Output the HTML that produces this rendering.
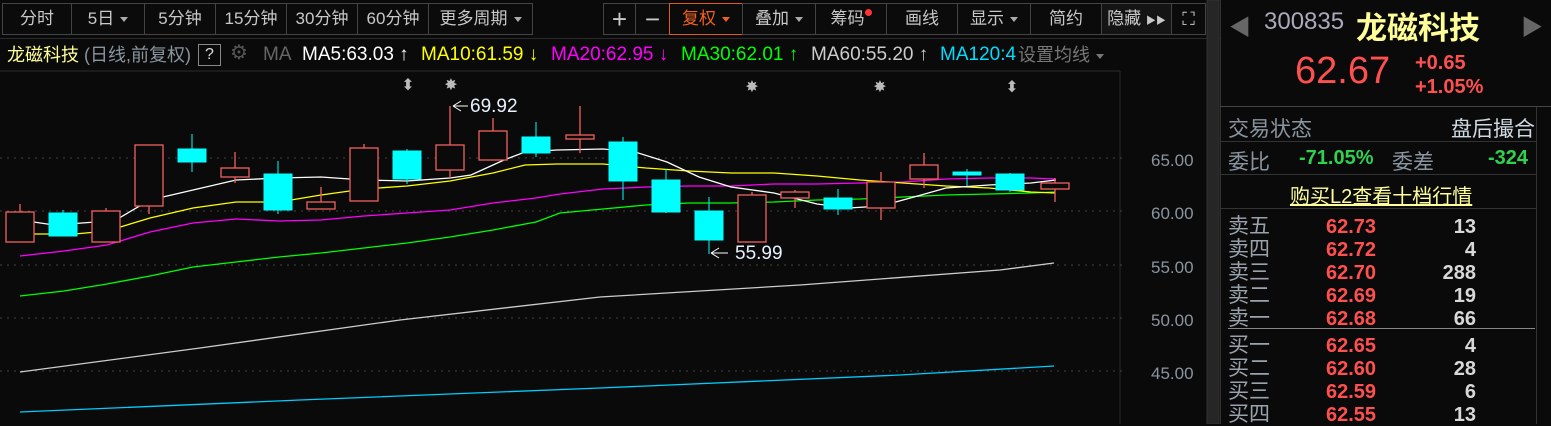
<!DOCTYPE html><html><head><meta charset="utf-8"><style>
body{margin:0;width:1551px;height:424px;background:#0a0a0a;overflow:hidden;position:relative;font-family:"Liberation Sans","Noto Sans CJK SC",sans-serif;}
.b{position:absolute;top:3px;height:32px;border:1px solid #444;box-sizing:border-box;color:#c8c8c8;font-size:17px;line-height:30px;text-align:center;background:#0b0b0b}
.t{position:absolute;white-space:nowrap}
.m{position:absolute;top:44px;font-size:19px;line-height:22px;white-space:nowrap}
.dd{display:inline-block;width:0;height:0;border-left:4px solid transparent;border-right:4px solid transparent;border-top:5px solid #aaa;vertical-align:middle;margin-left:6px}
.r{position:absolute;left:1228px;font-size:20px;line-height:22px;height:22px;width:300px}
.r .n{position:absolute;left:0;color:#9aa3ad;font-size:21px}
.r .p{position:absolute;left:98px;color:#ff5050;font-weight:bold}
.r .v{position:absolute;right:52px;color:#d8d8d8;font-weight:bold}
</style></head><body>
<div class="b" style="left:2px;width:70px">分时</div>
<div class="b" style="left:71px;width:74px">5日<span class="dd"></span></div>
<div class="b" style="left:144px;width:72px">5分钟</div>
<div class="b" style="left:215px;width:72px">15分钟</div>
<div class="b" style="left:286px;width:72px">30分钟</div>
<div class="b" style="left:357px;width:72px">60分钟</div>
<div class="b" style="left:428px;width:105px">更多周期<span class="dd"></span></div>
<div class="b" style="left:603px;width:33px;font-size:26px">+</div>
<div class="b" style="left:635px;width:35px;font-size:26px">−</div>
<div class="b" style="left:669px;width:74px;border-color:#e05a10;color:#f06020">复权<span class="dd" style="border-top-color:#f06020"></span></div>
<div class="b" style="left:742px;width:74px">叠加<span class="dd"></span></div>
<div class="b" style="left:815px;width:72px">筹码<span style="display:inline-block;width:7px;height:7px;border-radius:50%;background:#f33;vertical-align:top;margin-top:5px"></span></div>
<div class="b" style="left:886px;width:72px">画线</div>
<div class="b" style="left:957px;width:74px">显示<span class="dd"></span></div>
<div class="b" style="left:1030px;width:72px">简约</div>
<div class="b" style="left:1101px;width:71px;background:#141414">隐藏 <span style="font-size:10px">▶▶</span></div>
<div class="b" style="left:1171px;width:35px;font-size:18px">⛶</div>
<div style="position:absolute;left:0;top:38px;width:1220px;height:1px;background:#2a2a2a"></div>
<span class="m" style="left:7px;color:#ffff99;font-size:18px">龙磁科技</span>
<span class="m" style="left:84px;color:#8a95a0;font-size:18px">(日线,前复权)</span>
<span class="m" style="left:198px;top:44px;width:21px;height:20px;border:1px solid #888;color:#ddd;text-align:center;font-size:16px;line-height:20px">?</span>
<span class="m" style="left:230px;top:42px;color:#555;font-size:20px">⚙</span>
<span class="m" style="left:263px;color:#666">MA</span>
<span class="m" style="left:302px;color:#fff">MA5:63.03 ↑</span>
<span class="m" style="left:421px;color:#ff0">MA10:61.59 ↓</span>
<span class="m" style="left:551px;color:#f0f">MA20:62.95 ↓</span>
<span class="m" style="left:681px;color:#0f0">MA30:62.01 ↑</span>
<span class="m" style="left:811px;color:#ccc">MA60:55.20 ↑</span>
<span class="m" style="left:940px;color:#0df">MA120:4</span>
<span class="m" style="left:1018px;color:#777;font-size:18px">设置均线<span class="dd" style="border-top-color:#777"></span></span>
<svg style="position:absolute;left:0;top:0" width="1220" height="424">
<line x1="0" y1="71" x2="1120" y2="71" stroke="#2c2c2c"/>
<line x1="1120" y1="71" x2="1120" y2="424" stroke="#2a2a2a"/>
<g stroke="#444" stroke-dasharray="2,5"><line x1="0" y1="158" x2="1125" y2="158"/><line x1="0" y1="211" x2="1125" y2="211"/><line x1="0" y1="265" x2="1125" y2="265"/><line x1="0" y1="318" x2="1125" y2="318"/><line x1="0" y1="371" x2="1125" y2="371"/></g>
<rect x="1207" y="0" width="12" height="424" fill="#262626" stroke="#333"/>
<g font-size="17" fill="#8a95a0" font-family="Liberation Sans"><text x="1151" y="166">65.00</text><text x="1151" y="219">60.00</text><text x="1151" y="273">55.00</text><text x="1151" y="326">50.00</text><text x="1151" y="379">45.00</text></g>
<g fill="none" stroke-width="1.3">
<polyline stroke="#ccc" points="20,372 200,348 400,320 600,297 800,285 1000,270 1054,263"/>
<polyline stroke="#0cf" points="20,412 300,400 600,388 900,375 1054,366"/>
<polyline stroke="#0f0" points="20,296 64,291 107,284 150,276 193,267 236,262 279,257 321,253 364,248 407,243 450,237 493,230 536,222 560,213 603,209 646,205 689,203 731,203 774,202 817,200 860,199 903,197 946,195 989,194 1031,193 1055,192"/>
<polyline stroke="#f0f" points="20,256 64,251 107,245 150,232 193,223 236,219 279,221 321,220 364,216 407,213 450,210 493,203 536,198 560,194 603,189 646,187 689,186 731,186 774,184 817,184 860,183 903,182 946,179 989,178 1031,178 1055,179"/>
<polyline stroke="#ff0" points="20,234 75,234 107,231 150,218 193,208 236,202 279,202 321,195 364,189 407,186 450,181 493,173 525,165 557,164 603,164 646,168 689,171 731,173 774,173 817,176 860,180 903,183 946,186 989,188 1031,192 1055,193"/>
<polyline stroke="#fff" points="20,220 54,225 96,222 114,221 150,200 193,190 236,180 279,178 321,177 364,180 407,181 450,178 471,175 504,160 525,152 557,150 603,149 635,152 667,162 699,177 731,187 774,193 817,204 849,208 881,206 914,197 946,188 989,185 1031,183 1056,180"/>
</g>
<g stroke="#f06060" fill="#0a0a0a" stroke-width="1.3">
<line x1="20" y1="204" x2="20" y2="212"/><rect x="6" y="212" width="28" height="30"/>
<line x1="106" y1="208" x2="106" y2="211"/><rect x="92" y="211" width="28" height="31"/>
<line x1="149" y1="145" x2="149" y2="214"/><rect x="135" y="145" width="28" height="61"/>
<line x1="235" y1="152" x2="235" y2="183"/><rect x="221" y="168" width="28" height="9"/>
<line x1="321" y1="187" x2="321" y2="202"/><rect x="307" y="202" width="28" height="7"/>
<line x1="364" y1="144" x2="364" y2="148"/><rect x="350" y="148" width="28" height="53"/>
<line x1="450" y1="106" x2="450" y2="178"/><rect x="436" y="145" width="28" height="25"/>
<line x1="493" y1="118" x2="493" y2="131"/><rect x="479" y="131" width="28" height="29"/>
<line x1="580" y1="106" x2="580" y2="153"/><rect x="566" y="135" width="28" height="4"/>
<line x1="752" y1="192" x2="752" y2="195"/><rect x="738" y="195" width="28" height="47"/>
<line x1="795" y1="190" x2="795" y2="208"/><rect x="781" y="192" width="28" height="6"/>
<line x1="881" y1="172" x2="881" y2="220"/><rect x="867" y="182" width="28" height="26"/>
<line x1="924" y1="153" x2="924" y2="188"/><rect x="910" y="165" width="28" height="14"/>
<line x1="1055" y1="178" x2="1055" y2="202"/><rect x="1041" y="183" width="28" height="6"/>
</g>
<g stroke="#0ff" fill="#0ff">
<line x1="63" y1="210" x2="63" y2="236"/><rect x="49" y="213" width="28" height="23"/>
<line x1="192" y1="134" x2="192" y2="172"/><rect x="178" y="149" width="28" height="13"/>
<line x1="278" y1="161" x2="278" y2="214"/><rect x="264" y="174" width="28" height="36"/>
<line x1="407" y1="149" x2="407" y2="184"/><rect x="393" y="151" width="28" height="28"/>
<line x1="536" y1="122" x2="536" y2="157"/><rect x="522" y="137" width="28" height="16"/>
<line x1="623" y1="137" x2="623" y2="200"/><rect x="609" y="142" width="28" height="39"/>
<line x1="666" y1="169" x2="666" y2="213"/><rect x="652" y="180" width="28" height="32"/>
<line x1="709" y1="197" x2="709" y2="254"/><rect x="695" y="211" width="28" height="29"/>
<line x1="838" y1="189" x2="838" y2="215"/><rect x="824" y="198" width="28" height="11"/>
<line x1="967" y1="169" x2="967" y2="186"/><rect x="953" y="172" width="28" height="3"/>
<line x1="1010" y1="173" x2="1010" y2="192"/><rect x="996" y="174" width="28" height="16"/>
</g>
<g fill="#bbb" font-size="16" text-anchor="middle"><text x="408" y="90">⬍</text><text x="451" y="90">✸</text><text x="752" y="92">✸</text><text x="880" y="92">✸</text><text x="1012" y="92">⬍</text></g>
<g stroke="#fff" fill="none"><path d="M453 106 H468 M453 106 L461 101 M453 106 L461 111"/><path d="M711 253 H728 M711 253 L719 248 M711 253 L719 258"/></g>
<g fill="#e8f0ff" font-size="19"><text x="470" y="112">69.92</text><text x="735" y="259">55.99</text></g>
</svg>
<div style="position:absolute;left:1220px;top:0;width:1px;height:424px;background:#333"></div>
<div style="position:absolute;left:1536px;top:106px;width:1px;height:318px;background:#333"></div>
<div class="t" style="left:1229px;top:10px;color:#666;font-size:22px">◀</div>
<div class="t" style="left:1521px;top:10px;color:#666;font-size:22px">▶</div>
<div class="t" style="left:1264px;top:8px;color:#aab;font-size:24px">300835</div>
<div class="t" style="left:1356px;top:3px;color:#ffff99;font-size:31px;font-weight:bold">龙磁科技</div>
<div class="t" style="left:1295px;top:50px;color:#ff5050;font-size:38px">62.67</div>
<div class="t" style="left:1415px;top:51px;color:#ff5050;font-size:20px;font-weight:bold;line-height:24px">+0.65<br>+1.05%</div>
<div style="position:absolute;left:1220px;top:106px;width:331px;height:1px;background:#444"></div>
<div style="position:absolute;left:1220px;top:141px;width:316px;height:1px;background:#333"></div>
<div style="position:absolute;left:1220px;top:174px;width:316px;height:1px;background:#333"></div>
<div style="position:absolute;left:1220px;top:208px;width:316px;height:1px;background:#333"></div>
<div class="t" style="left:1228px;top:113px;color:#8a95a0;font-size:21px">交易状态</div>
<div class="t" style="left:1451px;top:113px;color:#cfd8e0;font-size:21px">盘后撮合</div>
<div class="t" style="left:1228px;top:146px;color:#8a95a0;font-size:21px">委比</div>
<div class="t" style="left:1299px;top:147px;color:#30d050;font-size:20px;font-weight:bold">-71.05%</div>
<div class="t" style="left:1392px;top:146px;color:#8a95a0;font-size:21px">委差</div>
<div class="t" style="left:1488px;top:147px;color:#30d050;font-size:20px;font-weight:bold">-324</div>
<div class="t" style="left:1290px;top:180px;color:#ffff99;font-size:20px;text-decoration:underline">购买L2查看十档行情</div>
<div class="r" style="top:216px"><span class="n">卖五</span><span class="p">62.73</span><span class="v">13</span></div>
<div class="r" style="top:239px"><span class="n">卖四</span><span class="p">62.72</span><span class="v">4</span></div>
<div class="r" style="top:262px"><span class="n">卖三</span><span class="p">62.70</span><span class="v">288</span></div>
<div class="r" style="top:285px"><span class="n">卖二</span><span class="p">62.69</span><span class="v">19</span></div>
<div class="r" style="top:308px"><span class="n">卖一</span><span class="p">62.68</span><span class="v">66</span></div>
<div style="position:absolute;left:1228px;top:328px;width:307px;height:1px;background:#888"></div>
<div class="r" style="top:335px"><span class="n">买一</span><span class="p">62.65</span><span class="v">4</span></div>
<div class="r" style="top:358px"><span class="n">买二</span><span class="p">62.60</span><span class="v">28</span></div>
<div class="r" style="top:381px"><span class="n">买三</span><span class="p">62.59</span><span class="v">6</span></div>
<div class="r" style="top:404px"><span class="n">买四</span><span class="p">62.55</span><span class="v">13</span></div>
</body></html>
